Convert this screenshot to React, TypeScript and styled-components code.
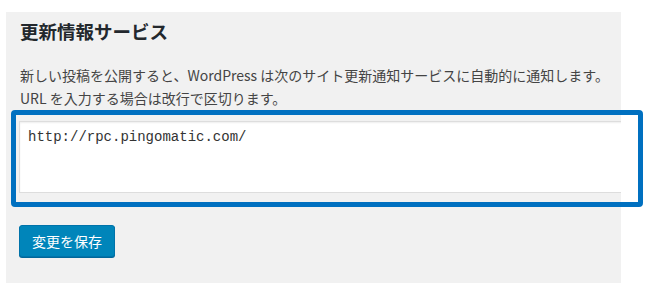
import styled, { createGlobalStyle } from "styled-components";

const GlobalStyle = createGlobalStyle`
  html, body {
    margin: 0;
    padding: 0;
    background: #ffffff;
  }
  body {
    font-family: "Noto Sans CJK JP", "Noto Sans", sans-serif;
  }
`;

const Page = styled.div`
  position: relative;
  width: 668px;
  height: 300px;
  padding: 12px 0 0 6px;
  box-sizing: border-box;
`;

const Panel = styled.section`
  width: 615px;
  height: 271px;
  background: #f1f1f1;
  overflow: hidden;
  padding: 6px 0 0 14px;
  box-sizing: border-box;
`;

const Title = styled.h2`
  margin: 0;
  font-size: 18.5px;
  line-height: 26px;
  font-weight: 700;
  color: #23282d;
`;

const Description = styled.p`
  margin: 20px 0 0;
  font-size: 14px;
  line-height: 23px;
  color: #444444;
  white-space: nowrap;
`;

const PingList = styled.textarea`
  display: block;
  margin: 11px 0 0 -1px;
  width: 640px;
  height: 72px;
  padding: 5px 8px;
  box-sizing: border-box;
  border: 1px solid #dddddd;
  border-right: none;
  box-shadow: inset 0 1px 2px rgba(0, 0, 0, 0.07);
  background: #ffffff;
  font-family: "Liberation Mono", "DejaVu Sans Mono", monospace;
  font-size: 14px;
  line-height: 20px;
  color: #333333;
  resize: none;
  outline: none;
`;

const SaveButton = styled.button`
  display: block;
  margin: 32px 0 0 -1px;
  width: 96px;
  height: 32px;
  padding: 0;
  border: 1px solid #0073aa;
  border-radius: 3px;
  background: #0085ba;
  box-shadow: 0 1px 0 #006799;
  color: #ffffff;
  font-family: "Noto Sans CJK JP", sans-serif;
  font-size: 14px;
  line-height: 30px;
  cursor: pointer;
`;

const Highlight = styled.div`
  position: absolute;
  left: 11px;
  top: 110px;
  width: 632px;
  height: 97px;
  box-sizing: border-box;
  border: 5px solid #0070c0;
  border-radius: 4px;
  pointer-events: none;
`;

export default function App() {
  return (
    <>
      <GlobalStyle />
      <Page>
        <Panel>
          <Title>更新情報サービス</Title>
          <Description>
            新しい投稿を公開すると、WordPress は次のサイト更新通知サービスに自動的に通知します。
            <br />
            URL を入力する場合は改行で区切ります。
          </Description>
          <PingList defaultValue="http://rpc.pingomatic.com/" spellCheck={false} />
          <SaveButton type="button">変更を保存</SaveButton>
        </Panel>
        <Highlight />
      </Page>
    </>
  );
}
